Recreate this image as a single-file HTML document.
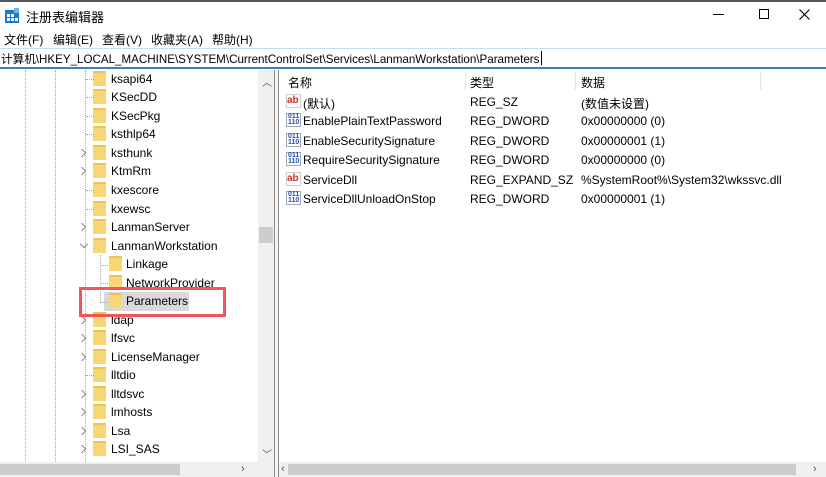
<!DOCTYPE html>
<html><head><meta charset="utf-8"><style>
*{margin:0;padding:0;box-sizing:border-box}
body{width:826px;height:477px;overflow:hidden;background:#fff;font-family:"Liberation Sans","Noto Sans CJK SC",sans-serif;font-size:12px;color:#000;position:relative}
.a{position:absolute;white-space:nowrap}
.f{position:absolute;width:13px;height:15px;background:#f8d674;border-top:2px solid #f1c24d}
.ar{position:absolute;width:6px;height:6px;border-right:1.3px solid #888;border-bottom:1.3px solid #888}
.dl{position:absolute;border-left:1px dotted #aaa}
.dh{position:absolute;border-top:1px dotted #aaa;width:8px}
</style></head><body>
<div class="a" style="left:0;top:0;width:826px;height:2px;background:#555"></div>
<svg class="a" style="left:4px;top:8px" width="16" height="16"><rect x="1" y="2" width="14" height="13" fill="#1e78c8"/><g fill="#fff"><rect x="3" y="6" width="3" height="3"/><rect x="7" y="6" width="3" height="3"/><rect x="3" y="10" width="3" height="3"/><rect x="7" y="10" width="3" height="3"/><rect x="11" y="10" width="3" height="3"/></g><rect x="10" y="0" width="5" height="5" fill="#6bb8f0"/></svg>
<div class="a" style="left:26px;top:7px;font-size:13px">注册表编辑器</div>
<div class="a" style="left:713px;top:14px;width:11px;height:1px;background:#000"></div>
<div class="a" style="left:759px;top:9px;width:10px;height:10px;border:1px solid #000"></div>
<svg class="a" style="left:799px;top:9px" width="11" height="11"><path d="M0.5 0.5L10.5 10.5M10.5 0.5L0.5 10.5" stroke="#000" stroke-width="1.1"/></svg>
<div class="a" style="left:4px;top:31px">文件(F)</div>
<div class="a" style="left:53px;top:31px">编辑(E)</div>
<div class="a" style="left:102px;top:31px">查看(V)</div>
<div class="a" style="left:151px;top:31px">收藏夹(A)</div>
<div class="a" style="left:212px;top:31px">帮助(H)</div>
<div class="a" style="left:0;top:48px;width:826px;height:21px;border-top:1px solid #c8dcf0;border-bottom:2px solid #3c7fc0"></div>
<div class="a" style="left:1px;top:51px;font-size:11.6px">计算机\HKEY_LOCAL_MACHINE\SYSTEM\CurrentControlSet\Services\LanmanWorkstation\Parameters</div>
<div class="a" style="left:541px;top:51px;width:1px;height:14px;background:#000"></div>
<!-- tree -->
<div class="a" style="left:104px;top:292px;width:85px;height:19px;background:#d9d9d9"></div>
<div class="dl" style="left:25px;top:70px;height:392px"></div>
<div class="dl" style="left:55px;top:70px;height:392px"></div>
<div class="dl" style="left:85px;top:70px;height:392px"></div>
<div class="dl" style="left:100px;top:255px;height:47px"></div>
<div class="dh" style="left:100px;top:265px"></div><div class="dh" style="left:100px;top:283px"></div><div class="dh" style="left:100px;top:302px"></div>
<div id="tree"></div>
<div class="a" style="left:79px;top:287px;width:147px;height:30px;border:3px solid #f0565a"></div>
<!-- tree scroll -->
<div class="a" style="left:258px;top:70px;width:16px;height:392px;background:#f0f0f0"></div>
<div class="a" style="left:259px;top:227px;width:14px;height:16px;background:#cdcdcd"></div>
<div class="a" style="left:262px;top:74px;font-size:10px;color:#555">︿</div>
<div class="a" style="left:262px;top:446px;font-size:10px;color:#555">﹀</div>
<div class="a" style="left:0;top:462px;width:274px;height:15px;background:#f0f0f0"></div>
<div class="a" style="left:0;top:464px;width:180px;height:11px;background:#cdcdcd"></div>
<div class="a" style="left:241px;top:463px;color:#555;font-size:11px">›</div>
<div class="a" style="left:274px;top:70px;width:5px;height:407px;border-left:1px solid #888;border-right:1px solid #888;background:#f4f4f4"></div>
<!-- right pane -->
<div class="a" style="left:465px;top:72px;width:1px;height:18px;background:#e5e5e5"></div>
<div class="a" style="left:575px;top:72px;width:1px;height:18px;background:#e5e5e5"></div>
<div class="a" style="left:760px;top:72px;width:1px;height:18px;background:#e5e5e5"></div>
<div class="a" style="left:288px;top:74px">名称</div>
<div class="a" style="left:470px;top:74px">类型</div>
<div class="a" style="left:581px;top:74px">数据</div>
<div id="rows"></div>
<div class="a" style="left:279px;top:462px;width:547px;height:15px;background:#f0f0f0"></div>
<div class="a" style="left:288px;top:464px;width:508px;height:11px;background:#cdcdcd"></div>
<div class="a" style="left:281px;top:463px;color:#555;font-size:11px">‹</div>
<div class="a" style="left:813px;top:463px;color:#555;font-size:11px">›</div>
<script>
var t=[["ksapi64",79,0,0],["KSecDD",97,0,0],["KSecPkg",116,0,0],["ksthlp64",134,0,0],["ksthunk",153,0,1],["KtmRm",171,0,1],["kxescore",190,0,0],["kxewsc",209,0,0],["LanmanServer",227,0,1],["LanmanWorkstation",246,0,2],["Linkage",264,1,0],["NetworkProvider",283,1,0],["Parameters",301,1,0],["ldap",320,0,1],["lfsvc",338,0,1],["LicenseManager",357,0,1],["lltdio",375,0,0],["lltdsvc",394,0,1],["lmhosts",412,0,1],["Lsa",431,0,1],["LSI_SAS",449,0,1]];
var h="";t.forEach(function(r){var fx=r[2]?109:93,tx=r[2]?126:111;
h+='<div class="f" style="left:'+fx+'px;top:'+(r[1]-8)+'px"></div><div class="a" style="left:'+tx+'px;top:'+(r[1]-7)+'px">'+r[0]+'</div>';
if(r[3]==1)h+='<div class="ar" style="left:79px;top:'+(r[1]-3)+'px;transform:rotate(-45deg)"></div>';
else if(r[3]==2)h+='<div class="ar" style="left:81px;top:'+(r[1]-5)+'px;transform:rotate(45deg)"></div>';
else if(!r[2])h+='<div class="dh" style="left:86px;top:'+r[1]+'px"></div>';});
document.getElementById("tree").innerHTML=h;
var R=[["ab","(默认)","REG_SZ","(数值未设置)",102],["b","EnablePlainTextPassword","REG_DWORD","0x00000000 (0)",121],["b","EnableSecuritySignature","REG_DWORD","0x00000001 (1)",141],["b","RequireSecuritySignature","REG_DWORD","0x00000000 (0)",160],["ab","ServiceDll","REG_EXPAND_SZ","%SystemRoot%\\System32\\wkssvc.dll",180],["b","ServiceDllUnloadOnStop","REG_DWORD","0x00000001 (1)",199]];
h="";R.forEach(function(r){var y=r[4]-7;
if(r[0]=="ab")h+='<div class="a" style="left:286px;top:'+(y-1)+'px;width:15px;height:14px;border:1px solid #ccc;color:#d03020;font-size:10px;font-weight:bold;line-height:12px">ab</div>';
else h+='<div class="a" style="left:286px;top:'+(y-1)+'px;width:15px;height:14px;border:1px solid #9ab;color:#2050c0;font-size:7px;font-weight:bold;line-height:6px;padding-left:1px">011<br>110</div>';
h+='<div class="a" style="left:303px;top:'+y+'px">'+r[1]+'</div><div class="a" style="left:470px;top:'+y+'px">'+r[2]+'</div><div class="a" style="left:581px;top:'+y+'px">'+r[3]+'</div>';});
document.getElementById("rows").innerHTML=h;
</script>
</body></html>
